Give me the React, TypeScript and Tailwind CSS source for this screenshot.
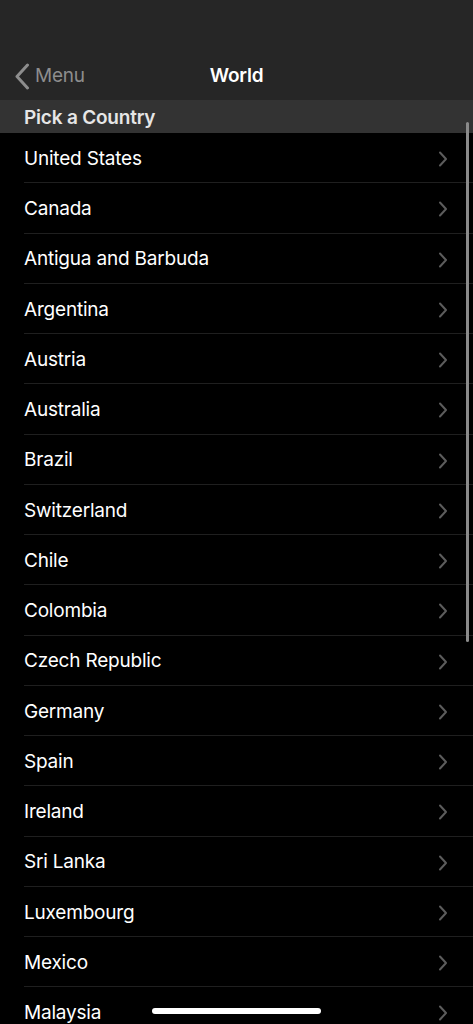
const countries = [
  "United States",
  "Canada",
  "Antigua and Barbuda",
  "Argentina",
  "Austria",
  "Australia",
  "Brazil",
  "Switzerland",
  "Chile",
  "Colombia",
  "Czech Republic",
  "Germany",
  "Spain",
  "Ireland",
  "Sri Lanka",
  "Luxembourg",
  "Mexico",
  "Malaysia",
];

function Chevron() {
  return (
    <svg width="10" height="16" viewBox="0 0 10 16" fill="none" className="text-[#5c5c5c]">
      <polyline points="2,1.5 8,8 2,14.5" stroke="currentColor" strokeWidth="2" strokeLinecap="round" strokeLinejoin="round" />
    </svg>
  );
}

export default function App() {
  return (
    <div
      className="relative h-[1024px] w-[473px] overflow-hidden bg-black text-white"
      style={{ fontFamily: "Inter, 'Noto Sans', sans-serif" }}
    >
      {/* nav bar */}
      <header className="h-[100px] bg-[#262626] pt-[50px]">
        <div className="relative flex h-[50px] items-center pt-[2px]">
          <div className="flex items-center pl-[14px] text-[#8d8d8d]">
            <svg width="16" height="27" viewBox="0 0 16 27" fill="none">
              <polyline points="13.5,2 3,13.5 13.5,25" stroke="currentColor" strokeWidth="3" strokeLinecap="round" strokeLinejoin="round" />
            </svg>
            <span className="ml-[5px] text-[19px] tracking-[-0.2px]">Menu</span>
          </div>
          <h1 className="absolute left-1/2 -translate-x-1/2 text-[19px] font-semibold tracking-[-0.2px]">
            World
          </h1>
        </div>
      </header>

      <div className="flex h-[33px] items-center bg-[#333333] pl-6 pt-[3px] text-[19px] font-semibold tracking-[-0.2px] text-[#e6e6e6]">
        Pick a Country
      </div>

      <ul>
        {countries.map((c) => (
          <li key={c} className="flex h-[50.25px] items-center pl-6">
            <div className="flex h-full flex-1 items-center justify-between border-b border-[#1f1f1f] pr-[25px] pt-[3px]">
              <span className="text-[19px] tracking-[-0.2px]">{c}</span>
              <Chevron />
            </div>
          </li>
        ))}
      </ul>

      {/* scroll indicator */}
      <div className="absolute left-[466px] top-[122px] h-[520px] w-[3px] rounded-full bg-[#8a8a8a]" />
      {/* home indicator */}
      <div className="absolute left-[152px] top-[1008px] h-[6px] w-[169px] rounded-full bg-white" />
    </div>
  );
}
